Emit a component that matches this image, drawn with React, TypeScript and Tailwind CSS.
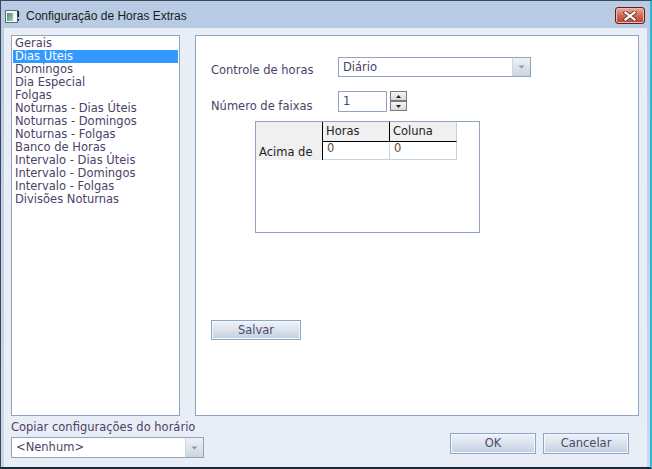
const items = [
  'Gerais',
  'Dias Úteis',
  'Domingos',
  'Dia Especial',
  'Folgas',
  'Noturnas - Dias Úteis',
  'Noturnas - Domingos',
  'Noturnas - Folgas',
  'Banco de Horas',
  'Intervalo - Dias Úteis',
  'Intervalo - Domingos',
  'Intervalo - Folgas',
  'Divisões Noturnas',
]

function DropArrow() {
  return (
    <svg width="7" height="4" viewBox="0 0 7 4">
      <path d="M0.5 0.5 L6.5 0.5 L3.5 3.5 Z" fill="#8b95a3" />
    </svg>
  )
}

function Combo({ text, className }: { text: string; className: string }) {
  return (
    <div className={`flex border border-[#8ea4c1] bg-white ${className}`}>
      <div className="flex-1 pl-[4px] flex items-center text-[#4d4166]">{text}</div>
      <div className="w-[18px] border-l border-[#cdd6e2] bg-gradient-to-b from-[#eef2f7] to-[#cbd5e1] flex items-center justify-center">
        <DropArrow />
      </div>
    </div>
  )
}

function Button({ label, className }: { label: string; className: string }) {
  return (
    <button
      className={`border border-[#8ca5c8] bg-gradient-to-b from-[#eef2f8] via-[#dbe3ee] to-[#c1cfe0] shadow-[inset_0_0_0_1px_#f4f7fb] text-[#4d4a6b] flex items-center justify-center ${className}`}
    >
      {label}
    </button>
  )
}

function SpinButton({ up }: { up: boolean }) {
  return (
    <div className="h-[10px] border border-[#7a7a7a] bg-gradient-to-b from-[#f6f6f6] to-[#d9d9d9] flex items-center justify-center">
      <svg width="5" height="3" viewBox="0 0 5 3">
        <path d={up ? 'M0 3 L5 3 L2.5 0 Z' : 'M0 0 L5 0 L2.5 3 Z'} fill="#222" />
      </svg>
    </div>
  )
}

export default function App() {
  return (
    <div className="w-[652px] h-[469px] flex flex-col overflow-hidden border-t border-l border-b-2 border-r-2 border-t-[#3c4757] border-l-[#3c4757] border-b-[#1d2a38] border-r-[#2fb6d6] bg-gradient-to-b from-[#b7cbe4] to-[#c9d8ea] font-['DejaVu_Sans',sans-serif] text-[11.5px] leading-[13px]">
      {/* Title bar */}
      <div className="h-[27px] flex items-start shrink-0">
        <div className="ml-[4px] mt-[9px]">
          <svg width="15" height="13" viewBox="0 0 15 13">
            <defs>
              <linearGradient id="ic" x1="0" y1="0" x2="1" y2="1">
                <stop offset="0" stopColor="#3f8f7c" />
                <stop offset="1" stopColor="#9fd3b8" />
              </linearGradient>
            </defs>
            <rect x="0.5" y="0.5" width="12" height="12" fill="#f6f6f6" stroke="#6a6a6a" />
            <rect x="2" y="3" width="6" height="8" fill="url(#ic)" />
            <rect x="12.5" y="1" width="1.6" height="6" fill="#222" />
            <rect x="12.5" y="9" width="1.6" height="1.6" fill="#222" />
          </svg>
        </div>
        <div className="ml-[6px] mt-[8px] font-['Liberation_Sans',sans-serif] text-[12px] leading-[15px] text-[#1b1b1b]">
          Configuração de Horas Extras
        </div>
        <div className="ml-auto mr-[5px] mt-[6px] w-[30px] h-[17px] rounded-[3px] border border-[#5a1f1f] bg-gradient-to-b from-[#eab0a2] via-[#cf6a56] to-[#b9412f] shadow-[inset_0_0_0_1px_#f1b8aa] flex items-center justify-center">
          <svg width="14" height="10" viewBox="0 0 14 10">
            <path d="M2.5 1.5 L11.5 8.5 M11.5 1.5 L2.5 8.5" stroke="#6b3a34" strokeWidth="4" strokeLinecap="square" />
            <path d="M2.5 1.5 L11.5 8.5 M11.5 1.5 L2.5 8.5" stroke="#ffffff" strokeWidth="2.2" strokeLinecap="square" />
          </svg>
        </div>
      </div>

      {/* Client area */}
      <div className="flex-1 mx-[3px] bg-[#e9eef6] flex flex-col">
        <div className="flex pt-[7px] pl-[7px]">
          {/* List */}
          <div className="w-[169px] h-[381px] border border-[#8ea4c1] bg-white pt-[1px] px-[1px]">
            {items.map((it, i) => (
              <div
                key={it}
                className={`h-[13px] pl-[2px] whitespace-nowrap ${i === 1 ? 'bg-[#3399ff] text-white' : 'text-[#4d4166]'}`}
              >
                {it}
              </div>
            ))}
          </div>

          {/* Right panel */}
          <div className="ml-[15px] w-[444px] h-[381px] border border-[#8ea4c1] bg-white pt-[21px] pl-[15px] flex flex-col">
            <div className="flex">
              <div className="w-[127px] mt-[7px] text-[#4d4166]">Controle de horas</div>
              <Combo text="Diário" className="w-[193px] h-[20px]" />
            </div>
            <div className="flex mt-[14px]">
              <div className="w-[127px] mt-[9px] text-[#4d4166]">Número de faixas</div>
              <div className="w-[49px] h-[21px] border border-[#8ea4c1] bg-white pl-[4px] flex items-center text-[#4d4166]">1</div>
              <div className="ml-[3px] w-[17px] flex flex-col">
                <SpinButton up />
                <SpinButton up={false} />
              </div>
            </div>

            {/* Grid */}
            <div className="mt-[8px] ml-[44px] w-[225px] h-[112px] border border-[#8ea4c1] bg-white text-[#222]">
              <div className="flex h-[20px]">
                <div className="w-[67px] bg-[#f0f0f0] border-r border-black" />
                <div className="w-[67px] bg-[#f0f0f0] border-r border-b border-r-black border-b-black pl-[3px] flex items-center">Horas</div>
                <div className="w-[67px] bg-[#f0f0f0] border-r border-b border-r-[#c5d2e3] border-b-black pl-[3px] flex items-center">Coluna</div>
              </div>
              <div className="flex h-[18px]">
                <div className="w-[67px] bg-[#f0f0f0] border-r border-black pl-[3px] flex items-center pt-[2px]">Acima de</div>
                <div className="w-[67px] border-r border-b border-[#c5d2e3] pl-[4px] text-[#5a4a3a]">0</div>
                <div className="w-[67px] border-r border-b border-[#c5d2e3] pl-[4px] text-[#5a4a3a]">0</div>
              </div>
            </div>

            <Button label="Salvar" className="mt-[87px] w-[90px] h-[20px]" />
          </div>
        </div>

        {/* Bottom */}
        <div className="flex pl-[7px] pr-[18px]">
          <div className="flex flex-col">
            <div className="mt-[5px] text-[#4d4166]">Copiar configurações do horário</div>
            <Combo text="<Nenhum>" className="mt-[3px] w-[193px] h-[21px]" />
          </div>
          <div className="ml-auto flex mt-[17px] gap-[7px]">
            <Button label="OK" className="w-[86px] h-[21px]" />
            <Button label="Cancelar" className="w-[86px] h-[21px]" />
          </div>
        </div>
      </div>
    </div>
  )
}
